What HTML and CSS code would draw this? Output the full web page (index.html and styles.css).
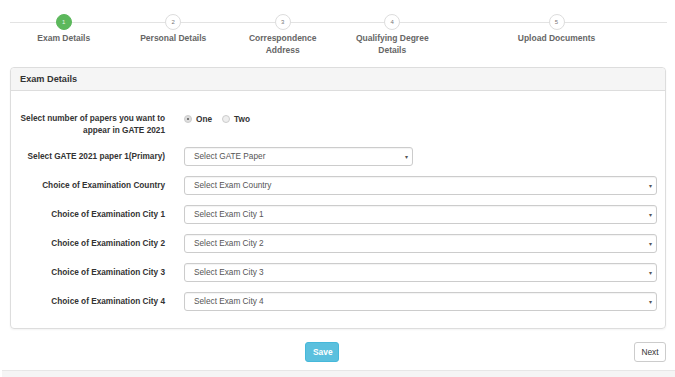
FILE: index.html
```html
<!DOCTYPE html>
<html lang="en">
<head>
    <meta charset="UTF-8">
    <meta name="viewport" content="width=device-width, initial-scale=1.0">
    <title>GATE 2021 Application</title>
    <link rel="stylesheet" href="styles.css">
</head>
<body>
    <div class="stepper">
        <div class="step active">
            <span class="dot">1</span>
            <span class="step-name">Exam Details</span>
        </div>
        <div class="step">
            <span class="dot">2</span>
            <span class="step-name">Personal Details</span>
        </div>
        <div class="step">
            <span class="dot">3</span>
            <span class="step-name">Correspondence<br>Address</span>
        </div>
        <div class="step">
            <span class="dot">4</span>
            <span class="step-name">Qualifying Degree<br>Details</span>
        </div>
        <div class="step">
            <span class="dot">5</span>
            <span class="step-name">Upload Documents</span>
        </div>
    </div>

    <div class="panel">
        <div class="panel-head">Exam Details</div>
        <div class="panel-body">
            <div class="row">
                <label class="lbl">Select number of papers you want to<br>appear in GATE 2021</label>
                <div class="radios">
                    <span class="radio checked"></span><span class="radio-text">One</span>
                    <span class="radio"></span><span class="radio-text">Two</span>
                </div>
            </div>
            <div class="row">
                <label class="lbl">Select GATE 2021 paper 1(Primary)</label>
                <div class="select short"><span>Select GATE Paper</span><span class="caret">&#9662;</span></div>
            </div>
            <div class="row">
                <label class="lbl">Choice of Examination Country</label>
                <div class="select"><span>Select Exam Country</span><span class="caret">&#9662;</span></div>
            </div>
            <div class="row">
                <label class="lbl">Choice of Examination City 1</label>
                <div class="select"><span>Select Exam City 1</span><span class="caret">&#9662;</span></div>
            </div>
            <div class="row">
                <label class="lbl">Choice of Examination City 2</label>
                <div class="select"><span>Select Exam City 2</span><span class="caret">&#9662;</span></div>
            </div>
            <div class="row">
                <label class="lbl">Choice of Examination City 3</label>
                <div class="select"><span>Select Exam City 3</span><span class="caret">&#9662;</span></div>
            </div>
            <div class="row">
                <label class="lbl">Choice of Examination City 4</label>
                <div class="select"><span>Select Exam City 4</span><span class="caret">&#9662;</span></div>
            </div>
        </div>
    </div>

    <div class="actions">
        <button class="btn btn-save">Save</button>
        <button class="btn btn-next">Next</button>
    </div>

    <div class="footer"></div>
</body>
</html>
```

FILE: styles.css
```css
body{
    margin: 0;
    font-family: "Liberation Sans", Arial, sans-serif;
    font-size: 8.25px;
    color: #333;
    background: #fff;
}

.stepper{
    position: relative;
    display: grid;
    grid-template-columns: 1fr 1fr 1fr 1fr 2fr;
    padding: 14px 9px 0 9px;
}

.stepper::before{
    content: "";
    position: absolute;
    left: 10px;
    right: 8px;
    top: 22px;
    height: 1px;
    background: #e3e3e3;
}

.step{
    position: relative;
    display: flex;
    flex-direction: column;
    align-items: center;
    text-align: center;
}

.dot{
    width: 14px;
    height: 14px;
    border: 1px solid #ddd;
    border-radius: 50%;
    background: #fff;
    color: #777;
    font-size: 6px;
    line-height: 14px;
}

.step.active .dot{
    background: #5cb85c;
    border-color: #5cb85c;
    color: #e8f5e8;
}

.step-name{
    margin-top: 2px;
    font-size: 8.5px;
    font-weight: bold;
    color: #666;
    line-height: 12px;
}

.panel{
    margin: 11px 9px 0 10px;
    border: 1px solid #ddd;
    border-radius: 4px;
    box-shadow: 0 1px 2px rgba(0,0,0,0.05);
}

.panel-head{
    height: 22px;
    line-height: 22px;
    padding: 0 9px;
    background: #f5f5f5;
    border-bottom: 1px solid #ddd;
    border-radius: 4px 4px 0 0;
    font-size: 9.2px;
    font-weight: bold;
    color: #333;
}

.panel-body{
    display: flex;
    flex-direction: column;
    gap: 10px;
    padding: 22px 8px 17px 0;
}

.row{
    display: grid;
    grid-template-columns: 154px 1fr;
    column-gap: 19px;
    align-items: center;
}

.row:first-child{
    align-items: start;
}

.lbl{
    text-align: right;
    font-weight: bold;
    line-height: 12px;
    color: #333;
}

.radios{
    display: flex;
    align-items: center;
    height: 12px;
}

.radio{
    width: 6px;
    height: 6px;
    border: 1px solid #ccc;
    border-radius: 50%;
    background: #eee;
    position: relative;
}

.radio.checked{
    background: #ddd;
}

.radio.checked::after{
    content: "";
    position: absolute;
    left: 2px;
    top: 2px;
    width: 2px;
    height: 2px;
    border-radius: 50%;
    background: #555;
}

.radio-text{
    font-weight: bold;
    margin-left: 4px;
    margin-right: 10px;
}

.select{
    display: flex;
    justify-content: space-between;
    align-items: center;
    height: 17px;
    padding: 0 4px 0 9px;
    border: 1px solid #ccc;
    border-radius: 3px;
    color: #555;
    background: #fff;
    box-shadow: inset 0 1px 1px rgba(0,0,0,0.05);
}

.select.short{
    width: 214px;
}

.caret{
    font-size: 6px;
    color: #555;
}

.actions{
    display: flex;
    justify-content: space-between;
    margin: 13px 9px 0 305px;
}

.btn{
    height: 20px;
    padding: 0 7px;
    border-radius: 3px;
    font-family: "Liberation Sans", Arial, sans-serif;
    font-size: 8.4px;
}

.btn-save{
    width: 34px;
    background: #5bc0de;
    border: 1px solid #46b8da;
    color: #fff;
    font-weight: bold;
}

.btn-next{
    width: 32px;
    padding: 0;
    background: #fff;
    border: 1px solid #ccc;
    color: #333;
}

.footer{
    height: 10px;
    margin: 8px 0 0 2px;
    background: #f5f5f5;
    border-top: 1px solid #e7e7e7;
}
```
